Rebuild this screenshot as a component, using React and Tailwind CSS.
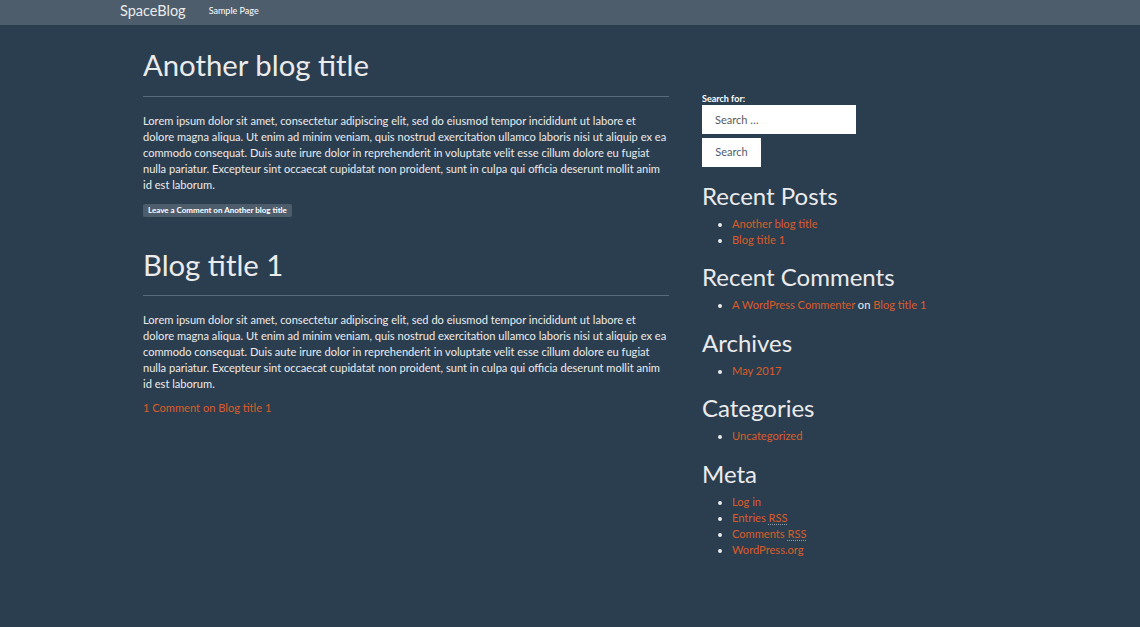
const lorem =
  'Lorem ipsum dolor sit amet, consectetur adipiscing elit, sed do eiusmod tempor incididunt ut labore et dolore magna aliqua. Ut enim ad minim veniam, quis nostrud exercitation ullamco laboris nisi ut aliquip ex ea commodo consequat. Duis aute irure dolor in reprehenderit in voluptate velit esse cillum dolore eu fugiat nulla pariatur. Excepteur sint occaecat cupidatat non proident, sunt in culpa qui officia deserunt mollit anim id est laborum.';

const Widget = ({ title, children }) => (
  <section className="mt-[16.5px] first:mt-[15.5px]">
    <h2 className="text-[24px] leading-[26px] mb-[7px]">{title}</h2>
    <ul className="list-disc pl-[30px] text-[11.1px] leading-[16px]">{children}</ul>
  </section>
);

const A = ({ children }) => (
  <a href="#" className="text-[#dc5c28] hover:underline">
    {children}
  </a>
);

const App = () => {
  return (
    <div
      className="min-h-[627px] bg-[#2b3e50] text-[#ebebeb]"
      style={{ fontFamily: 'Lato, "Open Sans", sans-serif' }}
    >
      <nav className="h-[25px] bg-[#4e5d6c] flex items-center pl-[120px]">
        <a href="#" className="text-[14.5px] leading-none text-[#ebebeb] -mt-[2px]">SpaceBlog</a>
        <a href="#" className="ml-[23px] text-[9px] leading-none text-white -mt-[4px]">Sample Page</a>
      </nav>

      <main className="flex pl-[143px] pt-[24px]">
        <div className="w-[526px]">
          <article>
            <h1 className="text-[29.3px] leading-[31px]">Another blog title</h1>
            <hr className="mt-[16px] mb-[16px] border-t border-[#596a7b]" />
            <p className="text-[11.1px] leading-[16px]">{lorem}</p>
            <a
              href="#"
              className="inline-block mt-[11px] bg-[#4e5d6c] text-white font-bold text-[8px] leading-[13px] px-[5px] rounded-[2px]"
            >
              Leave a Comment on Another blog title
            </a>
          </article>

          <article className="mt-[30px]">
            <h1 className="text-[29.3px] leading-[31px]">Blog title 1</h1>
            <hr className="mt-[15px] mb-[16px] border-t border-[#596a7b]" />
            <p className="text-[11.1px] leading-[16px]">{lorem}</p>
            <p className="mt-[8px] text-[11.1px] leading-[16px]">
              <A>1 Comment on Blog title 1</A>
            </p>
          </article>
        </div>

        <aside className="ml-[33px] w-[260px] mt-[44px]">
          <form onSubmit={(e) => e.preventDefault()}>
            <label className="block text-[9px] leading-[12px] font-bold text-white">Search for:</label>
            <input
              type="text"
              placeholder="Search …"
              className="block w-[154px] h-[29px] bg-white px-[13px] text-[11px] text-[#444] placeholder:text-[#5a5a5a] outline-none"
            />
            <button
              type="submit"
              className="mt-[4px] block w-[59px] h-[29px] bg-white text-[11px] text-[#4e5d6c]"
            >
              Search
            </button>
          </form>

          <div>
            <Widget title="Recent Posts">
              <li><A>Another blog title</A></li>
              <li><A>Blog title 1</A></li>
            </Widget>
            <Widget title="Recent Comments">
              <li>
                <A>A WordPress Commenter</A> on <A>Blog title 1</A>
              </li>
            </Widget>
            <Widget title="Archives">
              <li><A>May 2017</A></li>
            </Widget>
            <Widget title="Categories">
              <li><A>Uncategorized</A></li>
            </Widget>
            <Widget title="Meta">
              <li><A>Log in</A></li>
              <li>
                <A>Entries <abbr className="underline decoration-dotted decoration-[#8a9aa8] underline-offset-2">RSS</abbr></A>
              </li>
              <li>
                <A>Comments <abbr className="underline decoration-dotted decoration-[#8a9aa8] underline-offset-2">RSS</abbr></A>
              </li>
              <li><A>WordPress.org</A></li>
            </Widget>
          </div>
        </aside>
      </main>
    </div>
  );
};

export default App;
